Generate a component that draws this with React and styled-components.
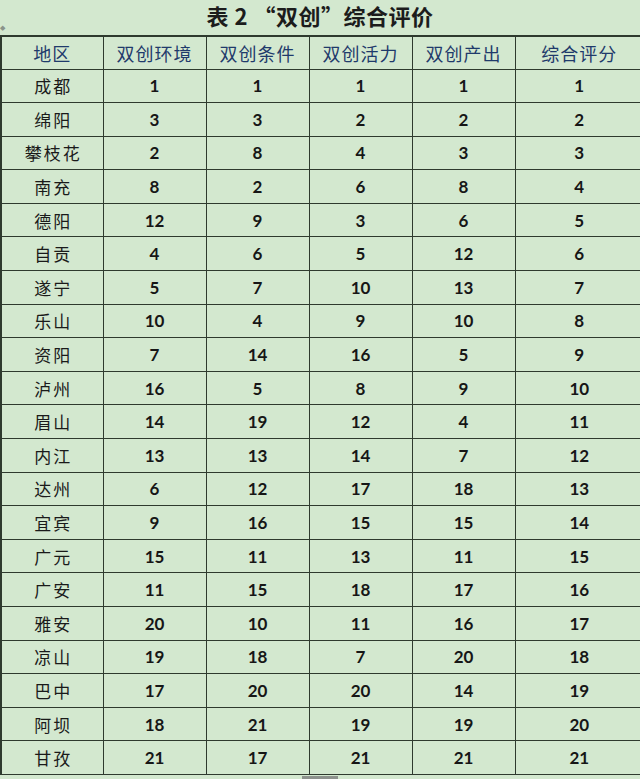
import styled, { createGlobalStyle } from "styled-components";

const GlobalStyle = createGlobalStyle`
  html, body {
    margin: 0;
    padding: 0;
    background: #d3e8cf;
  }
`;

const rows = [
  ["成都", 1, 1, 1, 1, 1],
  ["绵阳", 3, 3, 2, 2, 2],
  ["攀枝花", 2, 8, 4, 3, 3],
  ["南充", 8, 2, 6, 8, 4],
  ["德阳", 12, 9, 3, 6, 5],
  ["自贡", 4, 6, 5, 12, 6],
  ["遂宁", 5, 7, 10, 13, 7],
  ["乐山", 10, 4, 9, 10, 8],
  ["资阳", 7, 14, 16, 5, 9],
  ["泸州", 16, 5, 8, 9, 10],
  ["眉山", 14, 19, 12, 4, 11],
  ["内江", 13, 13, 14, 7, 12],
  ["达州", 6, 12, 17, 18, 13],
  ["宜宾", 9, 16, 15, 15, 14],
  ["广元", 15, 11, 13, 11, 15],
  ["广安", 11, 15, 18, 17, 16],
  ["雅安", 20, 10, 11, 16, 17],
  ["凉山", 19, 18, 7, 20, 18],
  ["巴中", 17, 20, 20, 14, 19],
  ["阿坝", 18, 21, 19, 19, 20],
  ["甘孜", 21, 17, 21, 21, 21],
];

const headers = ["地区", "双创环境", "双创条件", "双创活力", "双创产出", "综合评分"];

export default function App() {
  return (
    <Page>
      <GlobalStyle />
      <TitleBar>
        <Title>表 2 “双创”综合评价</Title>
        <Marker>◆</Marker>
      </TitleBar>
      <Table>
        <colgroup>
          <col style={{ width: 102 }} />
          <col style={{ width: 103 }} />
          <col style={{ width: 103 }} />
          <col style={{ width: 103 }} />
          <col style={{ width: 103 }} />
          <col />
        </colgroup>
        <thead>
          <HeadRow>
            {headers.map((h) => (
              <HeadCell key={h}>{h}</HeadCell>
            ))}
          </HeadRow>
        </thead>
        <tbody>
          {rows.map(([name, ...nums]) => (
            <Row key={name}>
              <NameCell>{name}</NameCell>
              {nums.map((n, i) => (
                <NumCell key={i}>{n}</NumCell>
              ))}
            </Row>
          ))}
        </tbody>
      </Table>
      <Thumb />
    </Page>
  );
}

const Page = styled.div`
  width: 640px;
  height: 779px;
  overflow: hidden;
  background: #d3e8cf;
`;

const TitleBar = styled.div`
  position: relative;
  height: 35px;
  display: flex;
  justify-content: center;
  align-items: flex-start;
`;

const Title = styled.h1`
  margin: 0;
  font-family: "Noto Sans CJK SC", sans-serif;
  font-size: 22px;
  font-weight: 700;
  color: #1c1c1c;
  line-height: 30px;
  letter-spacing: 0.5px;
`;

const Marker = styled.span`
  position: absolute;
  left: 0;
  top: 24px;
  font-size: 7px;
  line-height: 8px;
  color: #8a948a;
`;

const Table = styled.table`
  border-collapse: collapse;
  width: 644px;
  margin-left: 0;
  table-layout: fixed;
  border-top: 2px solid #2e3a2e;
  border-left: 2px solid #2e3a2e;
`;

const HeadRow = styled.tr`
  height: 33px;
`;

const Row = styled.tr`
  height: 33.6px;
`;

const Cell = styled.td`
  padding: 0;
  text-align: center;
  vertical-align: middle;
  border-right: 1.5px solid #2e3a2e;
  border-bottom: 1.5px solid #2e3a2e;
`;

const HeadCell = styled(Cell).attrs({ as: "th" })`
  font-family: "Noto Sans CJK SC", sans-serif;
  font-size: 18px;
  font-weight: 400;
  color: #1f3a6b;
  letter-spacing: 1px;
`;

const NameCell = styled(Cell)`
  font-family: "Noto Sans CJK SC", sans-serif;
  font-size: 17px;
  color: #1a1a1a;
  letter-spacing: 2px;
  padding-left: 2px;
`;

const NumCell = styled(Cell)`
  font-family: Lato, "Liberation Sans", sans-serif;
  font-size: 17px;
  font-weight: 700;
  color: #161616;
`;

const Thumb = styled.div`
  width: 36px;
  height: 6px;
  margin: 1px auto 0;
  background: #8d928d;
`;
